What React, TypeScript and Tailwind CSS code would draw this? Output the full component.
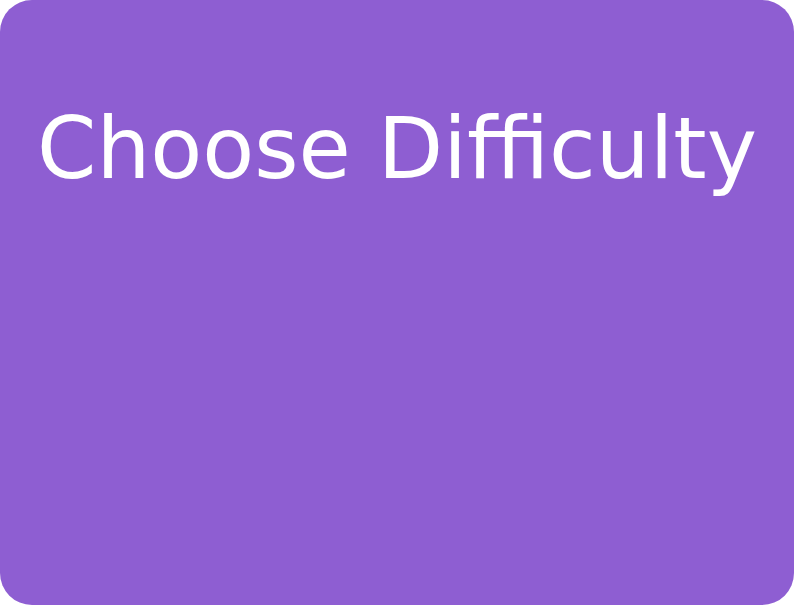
export default function App() {
  return (
    <div className="h-[605px] w-[794px] bg-white">
      <div className="flex h-full w-full flex-col items-center rounded-[32px] bg-[#8e5ed2] pt-[106px]">
        <h1
          className="text-[85px] leading-none font-normal text-white"
          style={{ fontFamily: '"DejaVu Sans", sans-serif' }}
        >
          Choose Difficulty
        </h1>
      </div>
    </div>
  );
}
